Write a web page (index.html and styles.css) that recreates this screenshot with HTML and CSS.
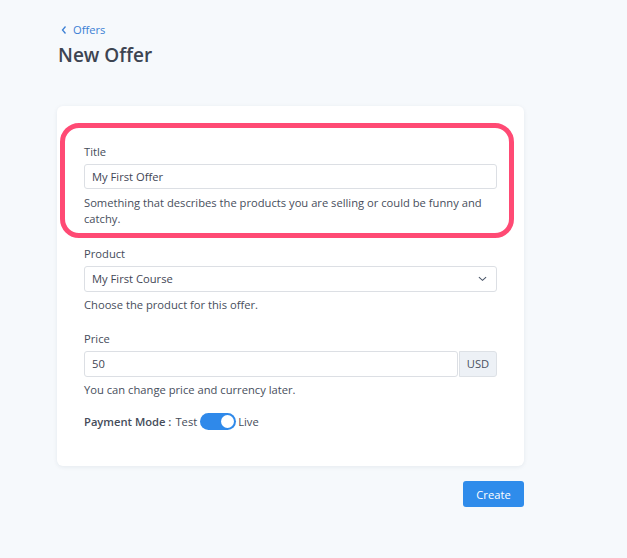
FILE: index.html
```html
<!DOCTYPE html>
<html>
<head>
<meta charset="utf-8">
<link rel="stylesheet" href="styles.css">
</head>
<body>
<div class="page">
  <a class="back" href="#"><svg class="chev" viewBox="0 0 8 10" width="8" height="10"><path d="M5.5 1.5 L2.5 5 L5.5 8.5" fill="none" stroke="currentColor" stroke-width="1.3"/></svg>Offers</a>
  <h1 class="title">New Offer</h1>
  <div class="card">
    <div class="highlight"></div>
    <div class="field">
      <label class="label">Title</label>
      <div class="input">My First Offer</div>
      <p class="help">Something that describes the products you are selling or could be funny and catchy.</p>
    </div>
    <div class="field">
      <label class="label">Product</label>
      <div class="input select">My First Course<svg class="caret" viewBox="0 0 10 6" width="9" height="6"><path d="M1 1 L5 4.5 L9 1" fill="none" stroke="#4a5568" stroke-width="1.2"/></svg></div>
      <p class="help tight">Choose the product for this offer.</p>
    </div>
    <div class="field">
      <label class="label">Price</label>
      <div class="group"><div class="input grow">50</div><div class="addon">USD</div></div>
      <p class="help tight">You can change price and currency later.</p>
    </div>
    <div class="mode">
      <span class="mode-label">Payment Mode :</span>
      <span>Test</span>
      <span class="toggle"><span class="knob"></span></span>
      <span>Live</span>
    </div>
  </div>
  <div class="actions"><button class="btn">Create</button></div>
</div>
</body>
</html>
```
FILE: styles.css
```css
html, body { margin: 0; padding: 0; }
body {
  background: #f6f9fc;
  font-family: "Open Sans", "Noto Sans", sans-serif;
  color: #3f4654;
  width: 627px;
  height: 558px;
  overflow: hidden;
}
.page { padding: 22px 0 0 57px; width: 467px; }
.back {
  display: flex; align-items: center; gap: 5px;
  color: #3b7fd4; text-decoration: none; font-size: 11.2px; line-height: 16px;
  margin-left: 3px;
}
.chev { display: block; }
.title {
  margin: 4px 0 0 1px; font-size: 19px; font-weight: 600; color: #3d4451; line-height: 26px;
}
.card {
  position: relative;
  margin-top: 38px;
  background: #fff;
  border-radius: 6px;
  box-shadow: 0 1px 4px rgba(30, 50, 80, 0.08);
  padding: 38px 27px 36px 27px;
}
.highlight {
  position: absolute;
  left: 3px; top: 17px; width: 444px; height: 105px;
  border: 5px solid #ff4a74;
  border-radius: 19px;
}
.field { margin-bottom: 19px; }
.field:nth-child(3) { margin-bottom: 18px; }
.field:nth-child(4) { margin-bottom: 15px; }
.label { display: block; font-size: 11.2px; line-height: 16px; color: #454c5a; margin-bottom: 4px; }
.input {
  box-sizing: border-box; height: 25px; border: 1px solid #dcdfe4; border-radius: 3px;
  padding: 0 7px; font-size: 11.2px; line-height: 23px; color: #3f4654; background: #fff;
}
.select { height: 26px; line-height: 24px; display: flex; align-items: center; justify-content: space-between; padding-right: 9px; }
.caret { display: block; }
.help { margin: 6px 0 0; font-size: 11.2px; line-height: 16px; color: #474e5c; }
.help.tight { margin-top: 5px; }
.group { display: flex; height: 26px; }
.group .input { height: 26px; line-height: 24px; }
.grow { flex: 1; }
.addon {
  box-sizing: border-box; width: 38px; margin-left: 1px; background: #edf1f6; border: 1px solid #dde1e6;
  border-radius: 0 3px 3px 0; font-size: 11.2px; line-height: 24px; text-align: center; color: #4a5160;
}
.mode { display: flex; align-items: center; font-size: 11.2px; line-height: 16px; color: #454c5a; }
.mode-label { font-weight: 600; margin-right: 4px; }
.toggle {
  position: relative; display: inline-block; width: 36px; height: 17px; border-radius: 9px;
  background: #2f89ea; margin: 0 2px 0 3px;
}
.knob {
  position: absolute; right: 2px; top: 2px; width: 13px; height: 13px; border-radius: 50%; background: #fff;
}
.actions { display: flex; justify-content: flex-end; margin-top: 15px; }
.btn {
  width: 61px; height: 26px; border: none; border-radius: 3px; background: #2f8ceb; color: #fff;
  font-family: "Open Sans", "Noto Sans", sans-serif; font-size: 11.2px; padding: 0;
}
```
